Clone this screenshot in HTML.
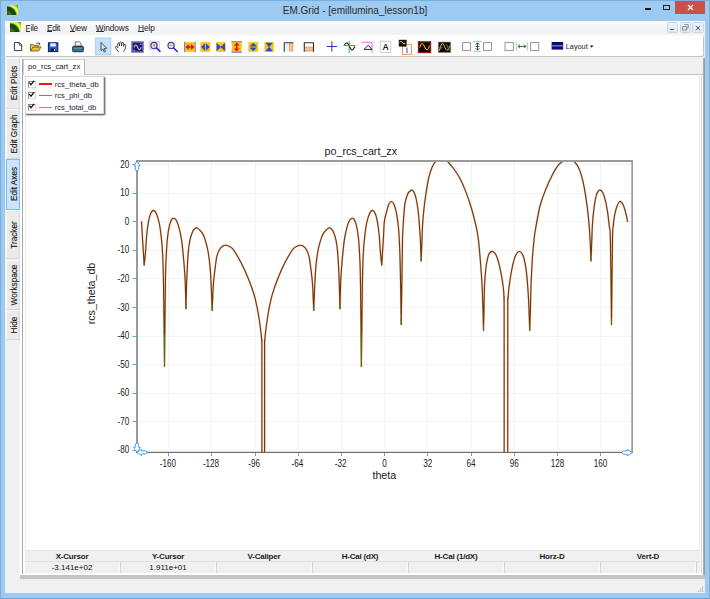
<!DOCTYPE html>
<html><head><meta charset="utf-8"><title>EM.Grid</title>
<style>
*{box-sizing:border-box;margin:0;padding:0}
html,body{width:710px;height:599px;overflow:hidden}
body{position:relative;background:#9dcaf1;font-family:"Liberation Sans",Arial,sans-serif;color:#000}
.abs{position:absolute}
#frame{left:0;top:0;width:710px;height:599px;border:1px solid #78aee0;border-bottom-color:#6fa5d8}
#title{left:0;top:4px;width:710px;text-align:center;font-size:10px;line-height:14px;color:#2a2a2a;white-space:nowrap}
#client{left:5px;top:21px;width:700px;height:572px;background:#f0f0f0}
#menubar{left:5px;top:21px;width:700px;height:14px;background:linear-gradient(#fafafa,#f1f1f1)}
.menu{top:22.5px;font-size:8.3px;line-height:10px;white-space:nowrap;color:#222}
.menu u{text-decoration:none;display:inline-block;height:9.6px;border-bottom:1px solid #333}
#toolbar{left:5px;top:35.3px;width:698px;height:21px;background:#fff;border-radius:0 2px 2px 0;box-shadow:1px 1px 0 #c4c4c4}
.ico{position:absolute;overflow:visible}
.appico{background:radial-gradient(circle at 0px 10.8px,#4a4a10 0,#56601a 4px,#0a480a 6.3px,#0a560a 8.8px,#d8e838 10.2px,#ffff58 11.4px,#b4e020 12.8px,#6cb810 14px,#4c9c00 15.5px)}
.vtab{left:6px;width:14px;background:#ebebeb;border:1px solid #fbfbfb;border-right-color:#d9d9d9;border-bottom-color:#d6d6d6}
.vtab span{position:absolute;left:50%;top:50%;transform:translate(-50%,-50%) rotate(-90deg);white-space:nowrap;font-size:8.2px;line-height:10px;margin-left:2px;color:#111;-webkit-text-stroke:0.1px #111}
.vtab.sel{background:#cbe3fb;border-color:#84b9ec}
#panel{left:19.8px;top:58.5px;width:683px;height:516.5px;background:#fff}
#tabstrip{left:22.9px;top:58px;width:680px;height:16.5px;background:#f0f0f0;border-bottom:1px solid #c4c4c4}
#tab{left:22.5px;top:59px;width:62px;height:15.5px;background:#fff;border:1px solid #d0d0d0;border-bottom:none;border-right-color:#b9b9b9;font-size:7.7px;line-height:10px;padding:1.8px 0 0 4.6px;white-space:nowrap;color:#222}
#legend{left:25px;top:76px;width:79px;height:38px;background:#fff;border:1px solid #d8d8d8;box-shadow:1px 1px 1.6px rgba(0,0,0,.75)}
.lg{position:absolute;left:0;width:78px;height:11px;font-size:7.6px;line-height:11px;white-space:nowrap}
.lg .cb{position:absolute;left:2px;top:2px;width:7.5px;height:7px;border:1px solid #8e8e8e;border-right-color:#ddd;border-bottom-color:#ddd;background:#fff}
.lg .ln{position:absolute;left:12.6px;top:4.5px;width:13px}
.lg .tx{position:absolute;left:28.8px;top:0;color:#223}
#sthead{left:24.8px;top:549.8px;width:675.7px;height:12px;background:#f0f0f0;border-top:1px solid #e0e0e0;border-bottom:1.7px solid #e1e1e1}
#strow{left:24.8px;top:561.8px;width:675.7px;height:11.2px;background:#f0f0f0}
.sh{position:absolute;top:550.5px;width:96px;text-align:center;font-size:8px;letter-spacing:-0.2px;line-height:11px;font-weight:bold;white-space:nowrap;color:#1a1a1a}
.sv{position:absolute;top:562.5px;width:96px;text-align:center;font-size:8px;line-height:10px;white-space:nowrap;color:#111}
.cell{position:absolute;top:562.2px;width:1px;height:10.6px;background:#d2d2d2;box-shadow:-0.8px 0 0 #fafafa}
svg text{font-family:"Liberation Sans",Arial,sans-serif}
.tk{font-size:10.4px;fill:#222}
</style></head><body>
<div id="frame" class="abs"></div>
<div id="title" class="abs">EM.Grid - [emillumina_lesson1b]</div>

<!-- app icon -->
<div class="abs appico" style="left:6.6px;top:4.5px;width:11px;height:10.8px"></div>

<div class="abs" style="left:645.4px;top:8.2px;width:5.6px;height:2px;background:#1a1a1a"></div>
<div class="abs" style="left:663px;top:4.5px;width:7.2px;height:5.8px;border:0.8px solid #222;border-top-width:1.6px"></div>
<div class="abs" style="left:675px;top:1px;width:30.2px;height:13px;background:#c8504f"></div>
<svg class="ico" style="left:687px;top:4.2px" width="7" height="7" viewBox="0 0 7 7"><path d="M1,1 L6,6 M6,1 L1,6" stroke="#fff" stroke-width="1.15"/></svg>

<div id="client" class="abs"></div>
<div id="menubar" class="abs"></div>
<div class="abs appico" style="left:9.9px;top:21.6px;width:11px;height:10.2px"></div>
<div class="abs menu" style="left:25.6px;letter-spacing:-0.25px"><u>F</u>ile</div>
<div class="abs menu" style="left:47px;letter-spacing:-0.35px"><u>E</u>dit</div>
<div class="abs menu" style="left:69.8px;letter-spacing:-0.3px"><u>V</u>iew</div>
<div class="abs menu" style="left:95.8px;letter-spacing:-0.1px"><u>W</u>indows</div>
<div class="abs menu" style="left:138px;letter-spacing:-0.08px"><u>H</u>elp</div>

<!-- MDI buttons -->
<div class="abs" style="left:666.6px;top:22px;width:11.3px;height:11.2px;background:linear-gradient(#edf3fb,#dfe9f6);border:1px solid #c3d5ea;border-radius:1.5px"></div>
<div class="abs" style="left:679.5px;top:22px;width:11.3px;height:11.2px;background:linear-gradient(#edf3fb,#dfe9f6);border:1px solid #c3d5ea;border-radius:1.5px"></div>
<div class="abs" style="left:692.3px;top:22px;width:11.3px;height:11.2px;background:linear-gradient(#edf3fb,#dfe9f6);border:1px solid #c3d5ea;border-radius:1.5px"></div>
<div class="abs" style="left:670px;top:29.2px;width:4px;height:1px;background:#555"></div>
<svg class="ico" style="left:682px;top:24.3px" width="7" height="7" viewBox="0 0 7 7"><path d="M2.2,0.6 H6.3 V3.8 H4.6 M0.6,2.6 H4.6 V6 H0.6 Z" fill="none" stroke="#666" stroke-width="0.7"/></svg>
<svg class="ico" style="left:695.2px;top:25px" width="6" height="6" viewBox="0 0 6 6"><path d="M0.8,0.8 L5.2,5.2 M5.2,0.8 L0.8,5.2" stroke="#555" stroke-width="1"/></svg>

<div id="toolbar" class="abs"></div>
<svg class="ico" style="left:0;top:0" width="710" height="60" viewBox="0 0 710 60">
 <!-- new -->
 <path d="M14.4,42.6 H19.4 L21.7,45 V50.6 H14.4 Z" fill="#fff" stroke="#222" stroke-width="0.9"/>
 <path d="M19.3,42.6 V45.1 H21.7" fill="none" stroke="#222" stroke-width="0.7"/>
 <!-- open -->
 <path d="M30.5,51 V44.6 H33.4 L34.2,45.6 H38.4 V47" fill="#f6d65a" stroke="#5a4a10" stroke-width="0.8"/>
 <path d="M30.6,51 L32.8,47 H41 L38.6,51 Z" fill="#f1c232" stroke="#5a4a10" stroke-width="0.8"/>
 <path d="M36.2,43.6 Q38.2,42.2 39.8,43.6" fill="none" stroke="#333" stroke-width="0.8"/>
 <path d="M38.8,42.6 L40.6,44.4 L38.6,44.8Z" fill="#333"/>
 <!-- save -->
 <rect x="48.4" y="42.8" width="9.4" height="8.8" fill="#1e66d0" stroke="#0d1850" stroke-width="1"/>
 <rect x="50.4" y="43.3" width="5.4" height="3.2" fill="#e9eef6"/>
 <rect x="50.6" y="48.4" width="5" height="3" fill="#10205a"/>
 <rect x="54" y="49" width="1.2" height="1.8" fill="#dfe6f2"/>
 <!-- print -->
 <path d="M75.2,46.3 V41.8 H79.4 L81,43.4 V46.3 Z" fill="#f4f4f4" stroke="#555" stroke-width="0.8"/>
 <rect x="72.6" y="46.2" width="10.8" height="5.6" rx="1" fill="#17307c" stroke="#0c1a50" stroke-width="0.7"/>
 <rect x="73.4" y="47.4" width="9.2" height="1.4" fill="#52c06a"/>
 <rect x="73.4" y="49.6" width="9.2" height="0.9" fill="#7ea6e8"/>
 <!-- pointer (selected) -->
 <rect x="95.3" y="38" width="15.6" height="17" fill="#c4e0fb" stroke="#9fcdf8" stroke-width="0.8"/>
 <path d="M101,42.4 V50.8 L102.9,49 L104.3,52 L105.5,51.4 L104.2,48.5 L106.8,48.3 Z" fill="#dcdcdc" stroke="#333" stroke-width="0.8" stroke-linejoin="round"/>
 <!-- hand -->
 <path d="M118.4,51.7 L115.4,47.5 Q114.9,46.3 116.2,46.3 L117.8,47.9 L117.8,43.5 Q118.5,42.5 119.2,43.4 L119.5,46 L119.8,42.3 Q120.6,41.2 121.4,42.3 L121.5,46 L122,42.8 Q122.8,41.9 123.5,42.9 L123.5,46.4 L124.4,44.5 Q125.3,43.9 125.8,44.9 L125.4,48.2 Q124.7,50.2 123.6,51.7" fill="#fff" stroke="#2a2a2a" stroke-width="0.8" stroke-linejoin="round" stroke-linecap="round"/>
 <!-- blue graph box -->
 <rect x="131.6" y="41.6" width="11.8" height="10.8" fill="#1a1a9e" stroke="#8a8ae2" stroke-width="1"/>
 <rect x="132.6" y="42.6" width="9.8" height="8.8" fill="none" stroke="#8c8cb4" stroke-width="0.5"/>
 <path d="M134.2,47.4 Q134.8,44.6 135.9,45 T137.8,47.5 T139.6,49.6 T141.2,47.2" fill="none" stroke="#f0c818" stroke-width="1.1"/>
 <rect x="140.2" y="43.6" width="1.3" height="1.3" fill="#f0c020"/><rect x="133.6" y="49.8" width="1.3" height="1.3" fill="#f0c020"/>
 <!-- zoom in -->
 <rect x="149.6" y="41.2" width="9.8" height="8.8" fill="#f4f4f4" stroke="#c8c8c8" stroke-width="0.7"/>
 <circle cx="154" cy="45.4" r="3.1" fill="#fdf3e0" stroke="#3838c8" stroke-width="1.2"/>
 <rect x="152.8" y="44.3" width="2.4" height="2.2" fill="#f08020"/>
 <path d="M156.4,47.8 L160,51.4" stroke="#2828b8" stroke-width="1.5" stroke-linecap="round"/>
 <!-- zoom out -->
 <circle cx="171.1" cy="45.4" r="3.1" fill="#fdf3e0" stroke="#3838c8" stroke-width="1.2"/>
 <rect x="169.6" y="44.8" width="3" height="1.2" fill="#f08020"/>
 <path d="M173.5,47.8 L177.3,51.5" stroke="#2828b8" stroke-width="1.5" stroke-linecap="round"/>
 <!-- fit icons -->
 <rect x="184.6" y="42.2" width="10.6" height="9.6" fill="#fcc40c"/>
 <rect x="184.2" y="41.8" width="0.9" height="10.4" fill="#6a6ad8"/><rect x="194.7" y="41.8" width="0.9" height="10.4" fill="#6a6ad8"/>
 <path d="M185.4,47 L188.8,43.9 V46.2 H191 V43.9 L194.4,47 L191,50.1 V47.8 H188.8 V50.1 Z" fill="#d81818"/>
 <rect x="200.4" y="42.2" width="10" height="9.6" fill="#fcc40c"/>
 <path d="M201,47 L204.9,43.2 V50.8 Z M209.8,47 L205.9,43.2 V50.8 Z" fill="#2848e0"/>
 <rect x="215.9" y="42.2" width="9.8" height="9.6" fill="#fcc40c"/>
 <path d="M216.6,43 L221.2,47 L216.6,51 Z M225,43 L220.4,47 L225,51 Z" fill="#2848e0"/>
 <rect x="231.8" y="41.8" width="9.8" height="10.4" fill="#fcc40c"/>
 <rect x="231.4" y="41.3" width="10.6" height="0.9" fill="#6a6ad8"/><rect x="231.4" y="51.8" width="10.6" height="0.9" fill="#6a6ad8"/>
 <path d="M236.7,42.4 L239.6,45.6 H237.5 V48.4 H239.6 L236.7,51.6 L233.8,48.4 H235.9 V45.6 H233.8 Z" fill="#d81818"/>
 <rect x="248.4" y="42.2" width="9.6" height="9.6" fill="#fcc40c"/>
 <path d="M253.2,42.8 L256.8,46.4 H249.6 Z M253.2,51.2 L256.8,47.6 H249.6 Z" fill="#2848e0"/>
 <rect x="264.4" y="42.2" width="9.4" height="9.6" fill="#fcc40c"/>
 <path d="M265.4,42.8 H272.8 L269.1,47.4 Z M265.4,51.2 H272.8 L269.1,46.6 Z" fill="#2848e0"/>
 <!-- panel icons -->
 <rect x="284.2" y="42.6" width="9.2" height="9" fill="#fff"/>
 <rect x="288.8" y="43" width="4.6" height="8.6" fill="#f2a878"/>
 <rect x="286.6" y="43" width="1" height="8.6" fill="#cfe2f4"/><rect x="290.6" y="43" width="0.8" height="8.6" fill="#fbe0cc"/>
 <path d="M284.3,51.8 V42.7 H293.5" fill="none" stroke="#333" stroke-width="1.1"/>
 <rect x="304.2" y="42.6" width="9.4" height="9" fill="#fff"/>
 <rect x="304.8" y="46.6" width="8.4" height="5" fill="#f2a878"/>
 <rect x="304.8" y="48.6" width="8.4" height="0.8" fill="#fbe0cc"/>
 <path d="M304.3,51.8 V42.7 H313.5 V51.8" fill="none" stroke="#333" stroke-width="1.1"/>
 <!-- cross -->
 <path d="M331.9,41.4 V51.6 M326.8,46.5 H337" stroke="#3030a8" stroke-width="1"/>
 <!-- axes curve -->
 <path d="M349.2,41 V53 M343.6,45.5 H355.3" stroke="#38b050" stroke-width="1"/>
 <path d="M344.4,45 Q346.6,41.4 348.4,44.2 L350,47.4 Q351.8,51.6 353.4,49 L354.8,46.6" fill="none" stroke="#111" stroke-width="1.1"/>
 <rect x="348.5" y="44.8" width="1.5" height="1.5" fill="#f08020"/>
 <!-- triangle -->
 <path d="M361.4,42.3 H372 V52.8" fill="none" stroke="#f050f0" stroke-width="0.9"/>
 <path d="M368.2,45.3 L372,49.4 H364 Z" fill="none" stroke="#222" stroke-width="1"/>
 <!-- A -->
 <rect x="380.2" y="41.2" width="10.6" height="11.2" fill="#fff" stroke="#c4c4c4" stroke-width="0.8"/>
 <text x="385.5" y="50" text-anchor="middle" font-family="Liberation Serif, serif" font-weight="bold" font-size="8.6" fill="#1c1c3c">A</text>
 <!-- legend icon -->
 <rect x="402.5" y="44.4" width="9" height="10" fill="#fff" stroke="#f09048" stroke-width="0.9"/>
 <rect x="406.2" y="47.6" width="1.6" height="5.6" fill="#8c8ce0"/>
 <rect x="398.8" y="39.8" width="7.8" height="6.8" fill="#111"/>
 <path d="M399.6,42.4 Q401,40 402.4,42.4 T405.4,43.4" fill="none" stroke="#f0d020" stroke-width="1"/>
 <!-- red box sine -->
 <rect x="418.4" y="41.8" width="12.2" height="10.8" fill="#0a0a0a" stroke="#a01a1a" stroke-width="1.2"/>
 <path d="M419.8,47.6 Q421.6,40.6 423.8,45.4 T427.4,50 Q428.6,49.4 429.4,45.6" fill="none" stroke="#f0d020" stroke-width="1"/>
 <!-- black box sine -->
 <rect x="438.2" y="42" width="12.6" height="10.6" fill="#0a0a0a" stroke="#a0a0a0" stroke-width="0.6"/>
 <path d="M439.4,50.8 Q441.8,39.6 444,45.2 T447.6,50.2 Q449,49 450,45.4" fill="none" stroke="#e8b020" stroke-width="1"/>
 <path d="M439.2,46.8 Q441,50.4 442.4,46.6 M446.4,44 Q447.8,48.4 449.6,50.8" fill="none" stroke="#a09a80" stroke-width="0.6"/>
 <!-- squares + arrows -->
 <rect x="462.6" y="42.6" width="8" height="7.8" fill="#fff" stroke="#8a8a8a" stroke-width="0.9"/>
 <rect x="473.4" y="41.2" width="8.2" height="0.9" fill="#7ae07a"/><rect x="473.4" y="50.8" width="8.2" height="0.9" fill="#7ae07a"/>
 <path d="M477.5,43 V50 M475.6,44.8 L477.5,42.8 L479.4,44.8 M475.6,48.2 L477.5,50.2 L479.4,48.2 M475.6,46.5 H479.4" fill="none" stroke="#222" stroke-width="0.8"/>
 <rect x="483.5" y="42.6" width="8" height="7.8" fill="#fff" stroke="#8a8a8a" stroke-width="0.9"/>
 <rect x="505" y="42.6" width="8.4" height="7.8" fill="#fff" stroke="#8a8a8a" stroke-width="0.9"/>
 <rect x="516.3" y="42" width="0.9" height="8.6" fill="#7ae07a"/><rect x="526.8" y="42" width="0.9" height="8.6" fill="#7ae07a"/>
 <path d="M518.2,46.4 H525.8 M520,44.6 L518.2,46.4 L520,48.2 M524,44.6 L525.8,46.4 L524,48.2" fill="none" stroke="#222" stroke-width="0.8"/>
 <rect x="530.6" y="42.6" width="8.2" height="7.8" fill="#fff" stroke="#8a8a8a" stroke-width="0.9"/>
 <!-- layout -->
 <rect x="551.6" y="42" width="11.6" height="7.6" fill="#0a0a80"/>
 <rect x="551.6" y="45.3" width="11.6" height="1.1" fill="#9c9cd4"/>
 <text x="565.8" y="49" font-size="7.3" fill="#1a1a1a">Layout</text>
 <path d="M589.8,45.6 H593.6 L591.7,47.8 Z" fill="#222"/>
</svg>


<!-- left tabs -->
<div class="abs vtab" style="top:58px;height:50.5px"><span>Edit Plots</span></div>
<div class="abs vtab" style="top:108.5px;height:50.5px"><span>Edit Graph</span></div>
<div class="abs vtab sel" style="top:159px;height:50.5px;left:5.5px;width:14.5px"><span>Edit Axes</span></div>
<div class="abs vtab" style="top:210px;height:49px"><span>Tracker</span></div>
<div class="abs vtab" style="top:259.5px;height:50px"><span>Workspace</span></div>
<div class="abs vtab" style="top:310px;height:29.5px"><span>Hide</span></div>

<div id="panel" class="abs"></div>
<div class="abs" style="left:21.7px;top:59px;width:1.2px;height:515px;background:#a8a8a8"></div>
<div class="abs" style="left:24.5px;top:75.5px;width:1px;height:473px;background:#ececec"></div>
<div class="abs" style="left:699px;top:75.5px;width:1px;height:473px;background:#ececec"></div>
<div class="abs" style="left:700.5px;top:74px;width:1.3px;height:500px;background:#d6d6d6"></div>
<div class="abs" style="left:702.8px;top:58px;width:1.8px;height:520.5px;background:linear-gradient(90deg,#b4b4b4,#969696)"></div>
<div class="abs" style="left:20.2px;top:575px;width:684.4px;height:3.6px;background:#c4c4c4"></div>
<div id="tabstrip" class="abs"></div>
<div id="tab" class="abs">po_rcs_cart_zx</div>

<div id="legend" class="abs">
 <div class="lg" style="top:1.5px"><span class="cb"></span><span class="ln" style="border-top:2px solid #f01818"></span><span class="tx">rcs_theta_db</span></div>
 <div class="lg" style="top:13px"><span class="cb"></span><span class="ln" style="border-top:1.4px solid #7878c8;top:5px"></span><span class="tx">rcs_phi_db</span></div>
 <div class="lg" style="top:24.5px"><span class="cb"></span><span class="ln" style="border-top:1.2px solid #62b862;top:5px"></span><span class="tx">rcs_total_db</span></div>
</div>
<svg class="ico" style="left:25px;top:76px" width="20" height="40" viewBox="0 0 20 40"><g fill="none" stroke="#111" stroke-width="1.3"><path d="M4.3,6.6 L6,8.6 L9,4.8"/><path d="M4.3,18.1 L6,20.1 L9,16.3"/><path d="M4.3,29.6 L6,31.6 L9,27.8"/></g></svg>

<!-- chart -->
<svg class="ico" style="left:0;top:0" width="710" height="599" viewBox="0 0 710 599">
 <defs><clipPath id="cp"><rect x="138" y="161" width="494" height="291.5"/></clipPath></defs>
 <line x1="168.5" y1="162" x2="168.5" y2="452" stroke="#f3f3f3" stroke-width="1"/><line x1="168.5" y1="452.5" x2="168.5" y2="456" stroke="#55b8b8" stroke-width="1"/><text transform="translate(167.8,466.8) scale(0.78,1)" text-anchor="middle" class="tk">-160</text><line x1="211.5" y1="162" x2="211.5" y2="452" stroke="#f3f3f3" stroke-width="1"/><line x1="211.5" y1="452.5" x2="211.5" y2="456" stroke="#55b8b8" stroke-width="1"/><text transform="translate(211.0,466.8) scale(0.78,1)" text-anchor="middle" class="tk">-128</text><line x1="255.5" y1="162" x2="255.5" y2="452" stroke="#f3f3f3" stroke-width="1"/><line x1="255.5" y1="452.5" x2="255.5" y2="456" stroke="#55b8b8" stroke-width="1"/><text transform="translate(254.2,466.8) scale(0.78,1)" text-anchor="middle" class="tk">-96</text><line x1="298.5" y1="162" x2="298.5" y2="452" stroke="#f3f3f3" stroke-width="1"/><line x1="298.5" y1="452.5" x2="298.5" y2="456" stroke="#55b8b8" stroke-width="1"/><text transform="translate(297.4,466.8) scale(0.78,1)" text-anchor="middle" class="tk">-64</text><line x1="341.5" y1="162" x2="341.5" y2="452" stroke="#f3f3f3" stroke-width="1"/><line x1="341.5" y1="452.5" x2="341.5" y2="456" stroke="#55b8b8" stroke-width="1"/><text transform="translate(340.6,466.8) scale(0.78,1)" text-anchor="middle" class="tk">-32</text><line x1="384.5" y1="162" x2="384.5" y2="452" stroke="#f3f3f3" stroke-width="1"/><line x1="384.5" y1="452.5" x2="384.5" y2="456" stroke="#55b8b8" stroke-width="1"/><text transform="translate(384.6,466.8) scale(0.78,1)" text-anchor="middle" class="tk">0</text><line x1="427.5" y1="162" x2="427.5" y2="452" stroke="#f3f3f3" stroke-width="1"/><line x1="427.5" y1="452.5" x2="427.5" y2="456" stroke="#55b8b8" stroke-width="1"/><text transform="translate(427.8,466.8) scale(0.78,1)" text-anchor="middle" class="tk">32</text><line x1="471.5" y1="162" x2="471.5" y2="452" stroke="#f3f3f3" stroke-width="1"/><line x1="471.5" y1="452.5" x2="471.5" y2="456" stroke="#55b8b8" stroke-width="1"/><text transform="translate(471.0,466.8) scale(0.78,1)" text-anchor="middle" class="tk">64</text><line x1="514.5" y1="162" x2="514.5" y2="452" stroke="#f3f3f3" stroke-width="1"/><line x1="514.5" y1="452.5" x2="514.5" y2="456" stroke="#55b8b8" stroke-width="1"/><text transform="translate(514.2,466.8) scale(0.78,1)" text-anchor="middle" class="tk">96</text><line x1="557.5" y1="162" x2="557.5" y2="452" stroke="#f3f3f3" stroke-width="1"/><line x1="557.5" y1="452.5" x2="557.5" y2="456" stroke="#55b8b8" stroke-width="1"/><text transform="translate(557.4,466.8) scale(0.78,1)" text-anchor="middle" class="tk">128</text><line x1="600.5" y1="162" x2="600.5" y2="452" stroke="#f3f3f3" stroke-width="1"/><line x1="600.5" y1="452.5" x2="600.5" y2="456" stroke="#55b8b8" stroke-width="1"/><text transform="translate(600.6,466.8) scale(0.78,1)" text-anchor="middle" class="tk">160</text><line x1="138" y1="450.5" x2="632" y2="450.5" stroke="#f3f3f3" stroke-width="1"/><line x1="132.5" y1="450.5" x2="136" y2="450.5" stroke="#55b8b8" stroke-width="1"/><text transform="translate(129.2,453.4) scale(0.78,1)" text-anchor="end" class="tk">-80</text><line x1="138" y1="421.5" x2="632" y2="421.5" stroke="#f3f3f3" stroke-width="1"/><line x1="132.5" y1="421.5" x2="136" y2="421.5" stroke="#55b8b8" stroke-width="1"/><text transform="translate(129.2,424.8) scale(0.78,1)" text-anchor="end" class="tk">-70</text><line x1="138" y1="393.5" x2="632" y2="393.5" stroke="#f3f3f3" stroke-width="1"/><line x1="132.5" y1="393.5" x2="136" y2="393.5" stroke="#55b8b8" stroke-width="1"/><text transform="translate(129.2,396.2) scale(0.78,1)" text-anchor="end" class="tk">-60</text><line x1="138" y1="364.5" x2="632" y2="364.5" stroke="#f3f3f3" stroke-width="1"/><line x1="132.5" y1="364.5" x2="136" y2="364.5" stroke="#55b8b8" stroke-width="1"/><text transform="translate(129.2,367.6) scale(0.78,1)" text-anchor="end" class="tk">-50</text><line x1="138" y1="336.5" x2="632" y2="336.5" stroke="#f3f3f3" stroke-width="1"/><line x1="132.5" y1="336.5" x2="136" y2="336.5" stroke="#55b8b8" stroke-width="1"/><text transform="translate(129.2,339.0) scale(0.78,1)" text-anchor="end" class="tk">-40</text><line x1="138" y1="307.5" x2="632" y2="307.5" stroke="#f3f3f3" stroke-width="1"/><line x1="132.5" y1="307.5" x2="136" y2="307.5" stroke="#55b8b8" stroke-width="1"/><text transform="translate(129.2,310.5) scale(0.78,1)" text-anchor="end" class="tk">-30</text><line x1="138" y1="278.5" x2="632" y2="278.5" stroke="#f3f3f3" stroke-width="1"/><line x1="132.5" y1="278.5" x2="136" y2="278.5" stroke="#55b8b8" stroke-width="1"/><text transform="translate(129.2,281.9) scale(0.78,1)" text-anchor="end" class="tk">-20</text><line x1="138" y1="250.5" x2="632" y2="250.5" stroke="#f3f3f3" stroke-width="1"/><line x1="132.5" y1="250.5" x2="136" y2="250.5" stroke="#55b8b8" stroke-width="1"/><text transform="translate(129.2,253.3) scale(0.78,1)" text-anchor="end" class="tk">-10</text><line x1="138" y1="221.5" x2="632" y2="221.5" stroke="#f3f3f3" stroke-width="1"/><line x1="132.5" y1="221.5" x2="136" y2="221.5" stroke="#55b8b8" stroke-width="1"/><text transform="translate(129.2,224.7) scale(0.78,1)" text-anchor="end" class="tk">0</text><line x1="138" y1="193.5" x2="632" y2="193.5" stroke="#f3f3f3" stroke-width="1"/><line x1="132.5" y1="193.5" x2="136" y2="193.5" stroke="#55b8b8" stroke-width="1"/><text transform="translate(129.2,196.1) scale(0.78,1)" text-anchor="end" class="tk">10</text><line x1="138" y1="164.5" x2="632" y2="164.5" stroke="#f3f3f3" stroke-width="1"/><line x1="132.5" y1="164.5" x2="136" y2="164.5" stroke="#55b8b8" stroke-width="1"/><text transform="translate(129.2,167.5) scale(0.78,1)" text-anchor="end" class="tk">20</text>
 <g clip-path="url(#cp)" fill="none" stroke-linejoin="round">
  <path d="M141.50,221.40 C141.68,224.50 142.15,232.72 142.60,240.00 C143.05,247.28 143.93,260.92 144.20,265.10 C144.45,262.58 145.28,254.98 145.70,250.00 C146.12,245.02 146.22,240.02 146.70,235.20 C147.18,230.38 147.93,224.73 148.60,221.10 C149.27,217.47 149.88,215.18 150.70,213.40 C151.52,211.62 152.57,210.40 153.50,210.40 C154.43,210.40 155.37,211.38 156.30,213.40 C157.23,215.42 158.28,218.63 159.10,222.50 C159.92,226.37 160.62,231.43 161.20,236.60 C161.78,241.77 162.22,245.60 162.60,253.50 C162.98,261.40 163.18,265.17 163.50,284.00 C163.82,302.83 164.33,352.75 164.50,366.50 C164.65,352.75 165.12,302.37 165.40,284.00 C165.68,265.63 165.83,264.20 166.20,256.30 C166.57,248.40 167.02,241.88 167.60,236.60 C168.18,231.32 169.00,227.47 169.70,224.60 C170.40,221.73 171.08,220.45 171.80,219.40 C172.53,218.35 173.23,218.02 174.05,218.30 C174.87,218.58 175.79,219.22 176.70,221.10 C177.61,222.98 178.67,226.32 179.50,229.60 C180.33,232.88 181.06,236.35 181.70,240.80 C182.34,245.25 182.88,251.37 183.35,256.30 C183.82,261.23 184.18,265.78 184.50,270.40 C184.82,275.02 185.06,277.62 185.30,284.00 C185.54,290.38 185.84,304.58 185.95,308.70 C186.06,304.58 186.38,290.85 186.60,284.00 C186.82,277.15 187.00,273.15 187.30,267.60 C187.60,262.05 187.93,255.40 188.40,250.70 C188.87,246.00 189.35,242.68 190.10,239.40 C190.85,236.12 192.08,232.80 192.90,231.00 C193.72,229.20 194.37,229.15 195.00,228.60 C195.63,228.05 195.87,227.42 196.70,227.70 C197.53,227.98 198.87,229.05 200.00,230.30 C201.13,231.55 202.45,232.97 203.50,235.20 C204.55,237.43 205.48,240.65 206.30,243.70 C207.12,246.75 207.77,249.52 208.40,253.50 C209.03,257.48 209.65,262.52 210.10,267.60 C210.55,272.68 210.75,276.85 211.10,284.00 C211.45,291.15 212.02,306.08 212.20,310.50 C212.40,306.08 212.90,291.15 213.40,284.00 C213.90,276.85 214.62,272.22 215.20,267.60 C215.78,262.98 216.15,259.35 216.90,256.30 C217.65,253.25 218.77,250.98 219.70,249.30 C220.63,247.62 221.42,246.87 222.50,246.20 C223.58,245.53 224.78,245.10 226.20,245.30 C227.62,245.50 229.68,246.48 231.00,247.40 C232.32,248.32 232.42,248.23 234.10,250.80 C235.78,253.37 238.75,258.22 241.10,262.80 C243.45,267.38 246.08,273.15 248.20,278.30 C250.32,283.45 252.35,289.02 253.80,293.70 C255.25,298.38 255.98,302.02 256.90,306.40 C257.82,310.78 258.63,315.73 259.30,320.00 C259.97,324.27 260.49,328.50 260.90,332.00 C261.31,335.50 261.58,337.67 261.75,341.00 C261.90,344.33 261.87,330.50 261.90,352.00 C261.93,373.50 261.90,450.33 261.93,470.00 C262.38,489.67 264.12,489.67 264.57,470.00 C264.60,450.33 264.57,373.50 264.60,352.00 C264.63,330.50 264.60,344.33 264.75,341.00 C264.92,337.67 265.20,335.50 265.60,332.00 C266.00,328.50 266.52,324.27 267.16,320.00 C267.81,315.73 268.60,310.78 269.49,306.40 C270.38,302.02 271.09,298.38 272.50,293.70 C273.91,289.02 275.88,283.45 277.93,278.30 C279.98,273.15 282.51,267.38 284.82,262.80 C287.13,258.22 290.12,253.37 291.80,250.80 C293.48,248.23 293.58,248.32 294.90,247.40 C296.22,246.48 298.28,245.50 299.70,245.30 C301.12,245.10 302.32,245.53 303.40,246.20 C304.48,246.87 305.27,247.62 306.20,249.30 C307.13,250.98 308.25,253.25 309.00,256.30 C309.75,259.35 310.12,262.98 310.70,267.60 C311.28,272.22 312.00,276.85 312.50,284.00 C313.00,291.15 313.50,306.08 313.70,310.50 C313.88,306.08 314.45,291.15 314.80,284.00 C315.15,276.85 315.35,272.68 315.80,267.60 C316.25,262.52 316.87,257.48 317.50,253.50 C318.13,249.52 318.78,246.75 319.60,243.70 C320.42,240.65 321.35,237.43 322.40,235.20 C323.45,232.97 324.77,231.55 325.90,230.30 C327.03,229.05 328.37,227.98 329.20,227.70 C330.03,227.42 330.27,228.05 330.90,228.60 C331.53,229.15 332.18,229.20 333.00,231.00 C333.82,232.80 335.05,236.12 335.80,239.40 C336.55,242.68 337.03,246.00 337.50,250.70 C337.97,255.40 338.30,262.05 338.60,267.60 C338.90,273.15 339.07,277.15 339.30,284.00 C339.52,290.85 339.84,304.58 339.95,308.70 C340.06,304.58 340.36,290.38 340.60,284.00 C340.84,277.62 341.07,275.02 341.40,270.40 C341.72,265.78 342.08,261.23 342.55,256.30 C343.02,251.37 343.56,245.25 344.20,240.80 C344.84,236.35 345.57,232.88 346.40,229.60 C347.23,226.32 348.29,222.98 349.20,221.10 C350.11,219.22 351.03,218.58 351.85,218.30 C352.67,218.02 353.37,218.35 354.10,219.40 C354.82,220.45 355.50,221.73 356.20,224.60 C356.90,227.47 357.72,231.32 358.30,236.60 C358.88,241.88 359.33,248.40 359.70,256.30 C360.07,264.20 360.22,265.63 360.50,284.00 C360.78,302.37 361.25,352.75 361.40,366.50 C361.57,352.75 362.08,302.83 362.40,284.00 C362.72,265.17 362.92,261.40 363.30,253.50 C363.68,245.60 364.12,241.77 364.70,236.60 C365.28,231.43 365.98,226.37 366.80,222.50 C367.62,218.63 368.67,215.42 369.60,213.40 C370.53,211.38 371.47,210.40 372.40,210.40 C373.33,210.40 374.38,211.62 375.20,213.40 C376.02,215.18 376.63,217.47 377.30,221.10 C377.97,224.73 378.72,230.38 379.20,235.20 C379.68,240.02 379.78,245.02 380.20,250.00 C380.62,254.98 381.45,262.58 381.70,265.10 C381.97,260.92 382.85,247.28 383.30,240.00 C383.75,232.72 383.82,226.22 384.40,221.40 C384.98,216.58 386.05,213.98 386.80,211.10 C387.55,208.22 388.13,205.70 388.90,204.10 C389.67,202.50 390.52,201.38 391.40,201.50 C392.28,201.62 393.33,202.73 394.20,204.80 C395.07,206.87 395.88,210.03 396.60,213.90 C397.32,217.77 398.00,222.60 398.50,228.00 C399.00,233.40 399.28,238.65 399.60,246.30 C399.92,253.95 400.13,260.87 400.40,273.90 C400.67,286.93 401.07,316.07 401.20,324.50 C401.33,316.07 401.78,287.98 402.00,273.90 C402.22,259.82 402.32,247.98 402.50,240.00 C402.68,232.02 402.70,232.02 403.10,226.00 C403.50,219.98 404.12,209.23 404.90,203.90 C405.67,198.57 406.90,196.12 407.75,194.00 C408.60,191.88 409.29,191.85 410.00,191.20 C410.71,190.55 411.20,189.63 412.00,190.10 C412.80,190.57 413.98,191.93 414.80,194.00 C415.62,196.07 416.27,198.97 416.90,202.50 C417.53,206.03 418.13,210.75 418.60,215.20 C419.07,219.65 419.40,225.07 419.70,229.20 C420.00,233.33 420.17,234.70 420.40,240.00 C420.63,245.30 420.98,257.50 421.10,261.00 C421.25,257.50 421.77,245.77 422.00,240.00 C422.23,234.23 422.18,231.48 422.50,226.40 C422.82,221.32 423.30,215.13 423.90,209.50 C424.50,203.87 425.27,198.00 426.10,192.60 C426.93,187.20 427.85,181.43 428.90,177.10 C429.95,172.77 431.23,169.25 432.40,166.60 C433.57,163.95 434.38,162.72 435.90,161.20 C437.42,159.68 439.62,157.50 441.50,157.50 C443.38,157.50 445.43,159.68 447.20,161.20 C448.97,162.72 450.10,163.95 452.10,166.60 C454.10,169.25 456.85,172.77 459.20,177.10 C461.55,181.43 464.10,187.20 466.20,192.60 C468.30,198.00 470.15,203.87 471.80,209.50 C473.45,215.13 475.17,222.48 476.10,226.40 C477.03,230.32 476.98,230.57 477.40,233.00 C477.82,235.43 478.23,237.83 478.60,241.00 C478.97,244.17 479.25,247.97 479.60,252.00 C479.95,256.03 480.28,259.48 480.70,265.20 C481.12,270.92 481.70,278.17 482.10,286.30 C482.50,294.43 482.87,306.65 483.10,314.00 C483.33,321.35 483.43,327.67 483.50,330.40 C483.57,327.67 483.73,321.35 483.90,314.00 C484.07,306.65 484.17,293.97 484.50,286.30 C484.83,278.63 485.32,272.92 485.90,268.00 C486.48,263.08 487.30,259.38 488.00,256.80 C488.70,254.22 489.32,253.38 490.10,252.50 C490.88,251.62 491.75,251.15 492.70,251.50 C493.65,251.85 494.82,252.78 495.80,254.60 C496.78,256.42 497.67,258.98 498.60,262.40 C499.53,265.82 500.58,270.63 501.40,275.10 C502.22,279.57 503.07,285.22 503.50,289.20 C503.93,293.18 503.89,295.20 504.00,299.00 C504.11,302.80 504.12,283.50 504.15,312.00 C504.18,340.50 504.15,443.67 504.18,470.00 C504.78,496.33 507.12,496.33 507.72,470.00 C507.75,443.67 507.74,339.83 507.75,312.00 C507.76,284.17 507.75,305.67 507.80,303.00 C507.88,300.33 507.98,298.78 508.20,296.00 C508.42,293.22 508.63,290.26 509.15,286.30 C509.67,282.34 510.48,276.70 511.30,272.25 C512.12,267.80 513.17,262.78 514.10,259.60 C515.03,256.43 516.02,254.55 516.90,253.20 C517.78,251.85 518.58,251.50 519.40,251.50 C520.22,251.50 521.05,252.08 521.80,253.20 C522.55,254.32 523.18,255.50 523.90,258.20 C524.62,260.90 525.50,265.18 526.10,269.40 C526.70,273.62 527.08,278.33 527.50,283.50 C527.92,288.67 528.33,295.32 528.60,300.40 C528.88,305.48 528.97,309.00 529.15,314.00 C529.33,319.00 529.61,327.67 529.70,330.40 C529.80,327.67 530.08,321.35 530.30,314.00 C530.52,306.65 530.65,295.60 531.00,286.30 C531.35,277.00 531.87,266.17 532.40,258.20 C532.93,250.23 533.71,243.20 534.20,238.50 C534.69,233.80 534.38,235.42 535.35,230.00 C536.32,224.58 538.29,212.70 540.00,206.00 C541.71,199.30 543.48,195.08 545.60,189.80 C547.72,184.52 550.58,178.40 552.70,174.30 C554.82,170.20 556.42,167.50 558.30,165.20 C560.18,162.90 562.22,161.78 564.00,160.50 C565.78,159.22 567.37,157.42 569.00,157.50 C570.63,157.58 572.30,159.48 573.80,161.00 C575.30,162.52 576.72,164.15 578.00,166.60 C579.28,169.05 580.43,172.07 581.50,175.70 C582.57,179.33 583.45,183.23 584.40,188.40 C585.35,193.57 586.43,200.83 587.20,206.70 C587.97,212.57 588.52,218.05 589.00,223.60 C589.48,229.15 589.77,233.77 590.10,240.00 C590.43,246.23 590.85,257.50 591.00,261.00 C591.13,257.50 591.55,246.23 591.80,240.00 C592.05,233.77 592.10,229.15 592.50,223.60 C592.90,218.05 593.57,211.40 594.20,206.70 C594.83,202.00 595.59,198.03 596.30,195.40 C597.01,192.77 597.78,191.78 598.45,190.90 C599.12,190.02 599.59,189.82 600.30,190.10 C601.01,190.38 601.83,190.77 602.70,192.60 C603.57,194.43 604.68,197.82 605.50,201.10 C606.32,204.38 606.97,208.08 607.60,212.30 C608.23,216.52 608.83,221.78 609.30,226.40 C609.77,231.02 610.03,223.65 610.40,240.00 C610.77,256.35 611.32,310.42 611.50,324.50 C611.67,310.42 612.22,256.35 612.50,240.00 C612.78,223.65 612.85,230.53 613.20,226.40 C613.55,222.27 614.00,218.48 614.60,215.20 C615.20,211.92 616.08,208.82 616.80,206.70 C617.52,204.58 618.27,203.37 618.90,202.50 C619.53,201.63 619.90,201.15 620.60,201.50 C621.30,201.85 622.33,203.03 623.10,204.60 C623.87,206.17 624.62,208.90 625.20,210.90 C625.78,212.90 626.20,214.77 626.60,216.60 C627.00,218.43 627.43,221.02 627.60,221.90" stroke="#ff4a3c" stroke-opacity="0.28" stroke-width="2"/>
  <path d="M141.50,221.40 C141.68,224.50 142.15,232.72 142.60,240.00 C143.05,247.28 143.93,260.92 144.20,265.10 C144.45,262.58 145.28,254.98 145.70,250.00 C146.12,245.02 146.22,240.02 146.70,235.20 C147.18,230.38 147.93,224.73 148.60,221.10 C149.27,217.47 149.88,215.18 150.70,213.40 C151.52,211.62 152.57,210.40 153.50,210.40 C154.43,210.40 155.37,211.38 156.30,213.40 C157.23,215.42 158.28,218.63 159.10,222.50 C159.92,226.37 160.62,231.43 161.20,236.60 C161.78,241.77 162.22,245.60 162.60,253.50 C162.98,261.40 163.18,265.17 163.50,284.00 C163.82,302.83 164.33,352.75 164.50,366.50 C164.65,352.75 165.12,302.37 165.40,284.00 C165.68,265.63 165.83,264.20 166.20,256.30 C166.57,248.40 167.02,241.88 167.60,236.60 C168.18,231.32 169.00,227.47 169.70,224.60 C170.40,221.73 171.08,220.45 171.80,219.40 C172.53,218.35 173.23,218.02 174.05,218.30 C174.87,218.58 175.79,219.22 176.70,221.10 C177.61,222.98 178.67,226.32 179.50,229.60 C180.33,232.88 181.06,236.35 181.70,240.80 C182.34,245.25 182.88,251.37 183.35,256.30 C183.82,261.23 184.18,265.78 184.50,270.40 C184.82,275.02 185.06,277.62 185.30,284.00 C185.54,290.38 185.84,304.58 185.95,308.70 C186.06,304.58 186.38,290.85 186.60,284.00 C186.82,277.15 187.00,273.15 187.30,267.60 C187.60,262.05 187.93,255.40 188.40,250.70 C188.87,246.00 189.35,242.68 190.10,239.40 C190.85,236.12 192.08,232.80 192.90,231.00 C193.72,229.20 194.37,229.15 195.00,228.60 C195.63,228.05 195.87,227.42 196.70,227.70 C197.53,227.98 198.87,229.05 200.00,230.30 C201.13,231.55 202.45,232.97 203.50,235.20 C204.55,237.43 205.48,240.65 206.30,243.70 C207.12,246.75 207.77,249.52 208.40,253.50 C209.03,257.48 209.65,262.52 210.10,267.60 C210.55,272.68 210.75,276.85 211.10,284.00 C211.45,291.15 212.02,306.08 212.20,310.50 C212.40,306.08 212.90,291.15 213.40,284.00 C213.90,276.85 214.62,272.22 215.20,267.60 C215.78,262.98 216.15,259.35 216.90,256.30 C217.65,253.25 218.77,250.98 219.70,249.30 C220.63,247.62 221.42,246.87 222.50,246.20 C223.58,245.53 224.78,245.10 226.20,245.30 C227.62,245.50 229.68,246.48 231.00,247.40 C232.32,248.32 232.42,248.23 234.10,250.80 C235.78,253.37 238.75,258.22 241.10,262.80 C243.45,267.38 246.08,273.15 248.20,278.30 C250.32,283.45 252.35,289.02 253.80,293.70 C255.25,298.38 255.98,302.02 256.90,306.40 C257.82,310.78 258.63,315.73 259.30,320.00 C259.97,324.27 260.49,328.50 260.90,332.00 C261.31,335.50 261.58,337.67 261.75,341.00 C261.90,344.33 261.87,330.50 261.90,352.00 C261.93,373.50 261.90,450.33 261.93,470.00 C262.38,489.67 264.12,489.67 264.57,470.00 C264.60,450.33 264.57,373.50 264.60,352.00 C264.63,330.50 264.60,344.33 264.75,341.00 C264.92,337.67 265.20,335.50 265.60,332.00 C266.00,328.50 266.52,324.27 267.16,320.00 C267.81,315.73 268.60,310.78 269.49,306.40 C270.38,302.02 271.09,298.38 272.50,293.70 C273.91,289.02 275.88,283.45 277.93,278.30 C279.98,273.15 282.51,267.38 284.82,262.80 C287.13,258.22 290.12,253.37 291.80,250.80 C293.48,248.23 293.58,248.32 294.90,247.40 C296.22,246.48 298.28,245.50 299.70,245.30 C301.12,245.10 302.32,245.53 303.40,246.20 C304.48,246.87 305.27,247.62 306.20,249.30 C307.13,250.98 308.25,253.25 309.00,256.30 C309.75,259.35 310.12,262.98 310.70,267.60 C311.28,272.22 312.00,276.85 312.50,284.00 C313.00,291.15 313.50,306.08 313.70,310.50 C313.88,306.08 314.45,291.15 314.80,284.00 C315.15,276.85 315.35,272.68 315.80,267.60 C316.25,262.52 316.87,257.48 317.50,253.50 C318.13,249.52 318.78,246.75 319.60,243.70 C320.42,240.65 321.35,237.43 322.40,235.20 C323.45,232.97 324.77,231.55 325.90,230.30 C327.03,229.05 328.37,227.98 329.20,227.70 C330.03,227.42 330.27,228.05 330.90,228.60 C331.53,229.15 332.18,229.20 333.00,231.00 C333.82,232.80 335.05,236.12 335.80,239.40 C336.55,242.68 337.03,246.00 337.50,250.70 C337.97,255.40 338.30,262.05 338.60,267.60 C338.90,273.15 339.07,277.15 339.30,284.00 C339.52,290.85 339.84,304.58 339.95,308.70 C340.06,304.58 340.36,290.38 340.60,284.00 C340.84,277.62 341.07,275.02 341.40,270.40 C341.72,265.78 342.08,261.23 342.55,256.30 C343.02,251.37 343.56,245.25 344.20,240.80 C344.84,236.35 345.57,232.88 346.40,229.60 C347.23,226.32 348.29,222.98 349.20,221.10 C350.11,219.22 351.03,218.58 351.85,218.30 C352.67,218.02 353.37,218.35 354.10,219.40 C354.82,220.45 355.50,221.73 356.20,224.60 C356.90,227.47 357.72,231.32 358.30,236.60 C358.88,241.88 359.33,248.40 359.70,256.30 C360.07,264.20 360.22,265.63 360.50,284.00 C360.78,302.37 361.25,352.75 361.40,366.50 C361.57,352.75 362.08,302.83 362.40,284.00 C362.72,265.17 362.92,261.40 363.30,253.50 C363.68,245.60 364.12,241.77 364.70,236.60 C365.28,231.43 365.98,226.37 366.80,222.50 C367.62,218.63 368.67,215.42 369.60,213.40 C370.53,211.38 371.47,210.40 372.40,210.40 C373.33,210.40 374.38,211.62 375.20,213.40 C376.02,215.18 376.63,217.47 377.30,221.10 C377.97,224.73 378.72,230.38 379.20,235.20 C379.68,240.02 379.78,245.02 380.20,250.00 C380.62,254.98 381.45,262.58 381.70,265.10 C381.97,260.92 382.85,247.28 383.30,240.00 C383.75,232.72 383.82,226.22 384.40,221.40 C384.98,216.58 386.05,213.98 386.80,211.10 C387.55,208.22 388.13,205.70 388.90,204.10 C389.67,202.50 390.52,201.38 391.40,201.50 C392.28,201.62 393.33,202.73 394.20,204.80 C395.07,206.87 395.88,210.03 396.60,213.90 C397.32,217.77 398.00,222.60 398.50,228.00 C399.00,233.40 399.28,238.65 399.60,246.30 C399.92,253.95 400.13,260.87 400.40,273.90 C400.67,286.93 401.07,316.07 401.20,324.50 C401.33,316.07 401.78,287.98 402.00,273.90 C402.22,259.82 402.32,247.98 402.50,240.00 C402.68,232.02 402.70,232.02 403.10,226.00 C403.50,219.98 404.12,209.23 404.90,203.90 C405.67,198.57 406.90,196.12 407.75,194.00 C408.60,191.88 409.29,191.85 410.00,191.20 C410.71,190.55 411.20,189.63 412.00,190.10 C412.80,190.57 413.98,191.93 414.80,194.00 C415.62,196.07 416.27,198.97 416.90,202.50 C417.53,206.03 418.13,210.75 418.60,215.20 C419.07,219.65 419.40,225.07 419.70,229.20 C420.00,233.33 420.17,234.70 420.40,240.00 C420.63,245.30 420.98,257.50 421.10,261.00 C421.25,257.50 421.77,245.77 422.00,240.00 C422.23,234.23 422.18,231.48 422.50,226.40 C422.82,221.32 423.30,215.13 423.90,209.50 C424.50,203.87 425.27,198.00 426.10,192.60 C426.93,187.20 427.85,181.43 428.90,177.10 C429.95,172.77 431.23,169.25 432.40,166.60 C433.57,163.95 434.38,162.72 435.90,161.20 C437.42,159.68 439.62,157.50 441.50,157.50 C443.38,157.50 445.43,159.68 447.20,161.20 C448.97,162.72 450.10,163.95 452.10,166.60 C454.10,169.25 456.85,172.77 459.20,177.10 C461.55,181.43 464.10,187.20 466.20,192.60 C468.30,198.00 470.15,203.87 471.80,209.50 C473.45,215.13 475.17,222.48 476.10,226.40 C477.03,230.32 476.98,230.57 477.40,233.00 C477.82,235.43 478.23,237.83 478.60,241.00 C478.97,244.17 479.25,247.97 479.60,252.00 C479.95,256.03 480.28,259.48 480.70,265.20 C481.12,270.92 481.70,278.17 482.10,286.30 C482.50,294.43 482.87,306.65 483.10,314.00 C483.33,321.35 483.43,327.67 483.50,330.40 C483.57,327.67 483.73,321.35 483.90,314.00 C484.07,306.65 484.17,293.97 484.50,286.30 C484.83,278.63 485.32,272.92 485.90,268.00 C486.48,263.08 487.30,259.38 488.00,256.80 C488.70,254.22 489.32,253.38 490.10,252.50 C490.88,251.62 491.75,251.15 492.70,251.50 C493.65,251.85 494.82,252.78 495.80,254.60 C496.78,256.42 497.67,258.98 498.60,262.40 C499.53,265.82 500.58,270.63 501.40,275.10 C502.22,279.57 503.07,285.22 503.50,289.20 C503.93,293.18 503.89,295.20 504.00,299.00 C504.11,302.80 504.12,283.50 504.15,312.00 C504.18,340.50 504.15,443.67 504.18,470.00 C504.78,496.33 507.12,496.33 507.72,470.00 C507.75,443.67 507.74,339.83 507.75,312.00 C507.76,284.17 507.75,305.67 507.80,303.00 C507.88,300.33 507.98,298.78 508.20,296.00 C508.42,293.22 508.63,290.26 509.15,286.30 C509.67,282.34 510.48,276.70 511.30,272.25 C512.12,267.80 513.17,262.78 514.10,259.60 C515.03,256.43 516.02,254.55 516.90,253.20 C517.78,251.85 518.58,251.50 519.40,251.50 C520.22,251.50 521.05,252.08 521.80,253.20 C522.55,254.32 523.18,255.50 523.90,258.20 C524.62,260.90 525.50,265.18 526.10,269.40 C526.70,273.62 527.08,278.33 527.50,283.50 C527.92,288.67 528.33,295.32 528.60,300.40 C528.88,305.48 528.97,309.00 529.15,314.00 C529.33,319.00 529.61,327.67 529.70,330.40 C529.80,327.67 530.08,321.35 530.30,314.00 C530.52,306.65 530.65,295.60 531.00,286.30 C531.35,277.00 531.87,266.17 532.40,258.20 C532.93,250.23 533.71,243.20 534.20,238.50 C534.69,233.80 534.38,235.42 535.35,230.00 C536.32,224.58 538.29,212.70 540.00,206.00 C541.71,199.30 543.48,195.08 545.60,189.80 C547.72,184.52 550.58,178.40 552.70,174.30 C554.82,170.20 556.42,167.50 558.30,165.20 C560.18,162.90 562.22,161.78 564.00,160.50 C565.78,159.22 567.37,157.42 569.00,157.50 C570.63,157.58 572.30,159.48 573.80,161.00 C575.30,162.52 576.72,164.15 578.00,166.60 C579.28,169.05 580.43,172.07 581.50,175.70 C582.57,179.33 583.45,183.23 584.40,188.40 C585.35,193.57 586.43,200.83 587.20,206.70 C587.97,212.57 588.52,218.05 589.00,223.60 C589.48,229.15 589.77,233.77 590.10,240.00 C590.43,246.23 590.85,257.50 591.00,261.00 C591.13,257.50 591.55,246.23 591.80,240.00 C592.05,233.77 592.10,229.15 592.50,223.60 C592.90,218.05 593.57,211.40 594.20,206.70 C594.83,202.00 595.59,198.03 596.30,195.40 C597.01,192.77 597.78,191.78 598.45,190.90 C599.12,190.02 599.59,189.82 600.30,190.10 C601.01,190.38 601.83,190.77 602.70,192.60 C603.57,194.43 604.68,197.82 605.50,201.10 C606.32,204.38 606.97,208.08 607.60,212.30 C608.23,216.52 608.83,221.78 609.30,226.40 C609.77,231.02 610.03,223.65 610.40,240.00 C610.77,256.35 611.32,310.42 611.50,324.50 C611.67,310.42 612.22,256.35 612.50,240.00 C612.78,223.65 612.85,230.53 613.20,226.40 C613.55,222.27 614.00,218.48 614.60,215.20 C615.20,211.92 616.08,208.82 616.80,206.70 C617.52,204.58 618.27,203.37 618.90,202.50 C619.53,201.63 619.90,201.15 620.60,201.50 C621.30,201.85 622.33,203.03 623.10,204.60 C623.87,206.17 624.62,208.90 625.20,210.90 C625.78,212.90 626.20,214.77 626.60,216.60 C627.00,218.43 627.43,221.02 627.60,221.90" stroke="#6c3c06" stroke-width="1.15"/>
  <path d="M144.20,262.60 L144.20,265.10 M164.50,334.50 L164.50,366.50 M185.95,302.70 L185.95,308.70 M212.20,304.50 L212.20,310.50 M313.70,304.50 L313.70,310.50 M339.95,302.70 L339.95,308.70 M361.40,334.50 L361.40,366.50 M381.70,262.60 L381.70,265.10 M401.20,318.50 L401.20,324.50 M421.10,258.50 L421.10,261.00 M483.50,324.40 L483.50,330.40 M529.70,324.40 L529.70,330.40 M591.00,258.50 L591.00,261.00 M611.50,318.50 L611.50,324.50 " stroke="#3f7a10" stroke-width="1"/>
 </g>
 <rect x="136" y="160" width="2" height="293" fill="#9a9a9a"/>
 <rect x="136" y="160" width="497" height="2" fill="#9a9a9a"/>
 <rect x="631.3" y="160" width="1.7" height="293" fill="#9a9a9a"/>
 <rect x="136" y="451.8" width="497" height="1.2" fill="#6e6e6e"/>
 <text x="360.8" y="154.6" text-anchor="middle" font-size="10.7" fill="#222">po_rcs_cart_zx</text>
 <text transform="translate(384.3,478.8) scale(0.94,1)" text-anchor="middle" font-size="11.4" fill="#222">theta</text>
 <text transform="translate(95.2,293.5) rotate(-90) scale(0.935,1)" text-anchor="middle" font-size="11.4" fill="#222">rcs_theta_db</text>
 <!-- axis handles -->
 <g fill="#fff" stroke="#2f96f4" stroke-width="0.9" stroke-linejoin="round">
  <path d="M137,161.2 L140,165.8 L138.7,165.8 L138.7,169.6 Q138.6,170.9 137,170.9 Q135.4,170.9 135.3,169.6 L135.3,165.8 L134,165.8 Z"/>
  <path d="M135.3,444.4 Q135.4,443.2 137,443.2 Q138.6,443.2 138.7,444.4 L138.7,447.4 L140.3,447.4 L137.6,451.6 L135.6,451 L133.7,447.4 L135.3,447.4 Z"/>
  <path d="M136.6,452.4 L141.6,449.4 L141.6,450.9 L145.6,450.9 Q146.9,451 146.9,452.4 Q146.9,453.8 145.6,453.9 L141.6,453.9 L141.6,455.5 Z"/>
  <path d="M632.6,452.6 L627.2,455.8 L627.2,454.2 L623.4,454.2 Q622.1,454.1 622.1,452.6 Q622.1,451.1 623.4,451 L627.2,451 L627.2,449.6 Z"/>
 </g>
</svg>

<!-- status -->
<div id="sthead" class="abs"></div>
<div id="strow" class="abs"></div>
<div class="sh" style="left:24px">X-Cursor</div>
<div class="sh" style="left:120px">Y-Cursor</div>
<div class="sh" style="left:216px">V-Caliper</div>
<div class="sh" style="left:312px">H-Cal (dX)</div>
<div class="sh" style="left:408px">H-Cal (1/dX)</div>
<div class="sh" style="left:504px">Horz-D</div>
<div class="sh" style="left:600px">Vert-D</div>
<div class="sv" style="left:24px">-3.141e+02</div>
<div class="sv" style="left:120px">1.911e+01</div>
<div class="cell" style="left:120px"></div><div class="cell" style="left:216px"></div><div class="cell" style="left:312px"></div><div class="cell" style="left:408px"></div><div class="cell" style="left:504px"></div><div class="cell" style="left:600px"></div><div class="cell" style="left:696px"></div>
<!-- grip -->
<svg class="ico" style="left:697px;top:586px" width="7" height="7" viewBox="0 0 7 7"><g fill="#b4b4b4"><rect x="5" y="0.5" width="1.3" height="1.3"/><rect x="3" y="2.5" width="1.3" height="1.3"/><rect x="5" y="2.5" width="1.3" height="1.3"/><rect x="1" y="4.5" width="1.3" height="1.3"/><rect x="3" y="4.5" width="1.3" height="1.3"/><rect x="5" y="4.5" width="1.3" height="1.3"/></g></svg>
</body></html>
